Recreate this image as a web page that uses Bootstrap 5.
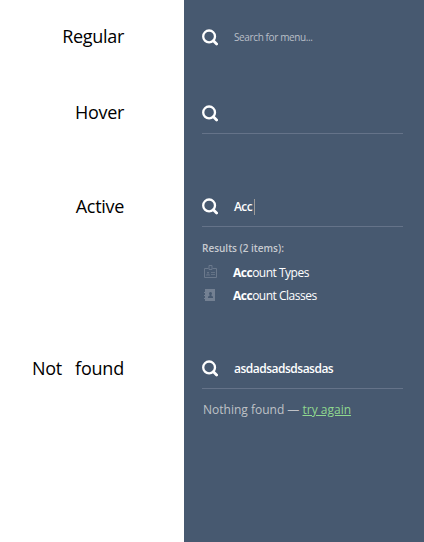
<!DOCTYPE html>
<html lang="en">
<head>
<meta charset="utf-8">
<meta name="viewport" content="width=device-width, initial-scale=1">
<title>Menu search states</title>
<link href="https://cdn.jsdelivr.net/npm/bootstrap@5.3.0/dist/css/bootstrap.min.css" rel="stylesheet">
<style>
body{font-family:"Open Sans","Noto Sans",sans-serif;background:#fff;color:#000;height:542px;overflow:hidden}
.state-row{padding-top:17px;background:linear-gradient(90deg,#fff 184px,#475970 184px)}
.state-regular{height:76px}
.state-hover{height:93px}
.state-active{height:162px}
.state-missing{height:211px}
.state-label{width:184px;padding-right:60px;font-size:18px;line-height:39px;letter-spacing:-.3px;white-space:pre}
.state-active .state-label,.state-missing .state-label{line-height:41px}
.state-missing .state-label{word-spacing:2px;letter-spacing:-.2px}
.panel{width:240px;padding:0 21px 0 18px;color:#fff}
.field{height:41px;border-bottom:1px solid transparent;font-size:12px}
.field.lined{border-color:#657389}
.field svg{width:16px;height:17px;margin-right:16px;flex:none}
.state-hover svg,.state-active .field svg,.state-missing svg{margin-top:1px}
.hint{font-size:10px;color:#b9bfc8;letter-spacing:-.38px;padding-top:1px}
.typed{font-weight:600;padding-top:2px}
.acc{letter-spacing:-.6px}
.nf{letter-spacing:-.5px}
.caret{width:1px;height:16px;background:#9b9a98;margin:1px 0 0 2px}
.results-title{font-size:10px;font-weight:600;line-height:14px;color:#c8cbd0;margin-top:14px}
.results{margin-top:5px}
.result{height:23px;font-size:12px;letter-spacing:-.5px}
.result span{padding-top:2px}
.result svg{width:15px;height:14px;margin-right:16px;flex:none}
.empty{font-size:12px;line-height:18px;color:#bfc2c7;margin-top:12px;padding-left:1px}
.empty a{color:#8fd88f}
</style>
<script src="https://cdn.jsdelivr.net/npm/bootstrap@5.3.0/dist/js/bootstrap.bundle.min.js"></script>
</head>
<body>
<svg class="d-none">
<symbol id="search" viewBox="0 0 16 17"><circle cx="7.1" cy="7.4" r="5.9" fill="none" stroke="#fff" stroke-width="2.3"/><path d="M11.4 11.8L14.6 15" stroke="#fff" stroke-width="2.8" stroke-linecap="round"/></symbol>
</svg>
<main>
<section class="state-row state-regular d-flex">
<div class="state-label text-end">Regular</div>
<div class="panel"><div class="field d-flex align-items-center"><svg><use href="#search"/></svg><span class="hint">Search for menu...</span></div></div>
</section>
<section class="state-row state-hover d-flex">
<div class="state-label text-end">Hover</div>
<div class="panel"><div class="field lined d-flex align-items-center"><svg><use href="#search"/></svg></div></div>
</section>
<section class="state-row state-active d-flex">
<div class="state-label text-end">Active</div>
<div class="panel">
<div class="field lined d-flex align-items-center"><svg><use href="#search"/></svg><span class="typed acc">Acc</span><span class="caret"></span></div>
<div class="results-title">Results (2 items):</div>
<div class="results">
<div class="result d-flex align-items-center"><svg viewBox="0 0 15 14" fill="none" stroke="#6b798c"><path d="M6.500 3.500H2.500v9h12v-9h-4M7 .500h3v4H7z"/><path d="M9 7.500h4M9 9.500h4M4 10h4M5 7.500h2M6 7v3" stroke-opacity=".8"/></svg><span><b>Acc</b>ount Types</span></div>
<div class="result d-flex align-items-center"><svg viewBox="0 0 15 14"><path fill="#738092" d="M3 1h10v12H3v-2H2v-1h1V8H2V7h1V5H2V4h1z"/><path fill="#475970" d="M8.500 4a1.500 1.500 0 0 1 1 2.600V8l1.500.5V10H6V8.500L7.500 8V6.600A1.500 1.500 0 0 1 8.500 4z"/></svg><span><b>Acc</b>ount Classes</span></div>
</div>
</div>
</section>
<section class="state-row state-missing d-flex">
<div class="state-label text-end">Not  found</div>
<div class="panel">
<div class="field lined d-flex align-items-center"><svg><use href="#search"/></svg><span class="typed nf">asdadsadsdsasdas</span></div>
<div class="empty text-nowrap">Nothing found — <a href="#">try again</a></div>
</div>
</section>
</main>
</body>
</html>
